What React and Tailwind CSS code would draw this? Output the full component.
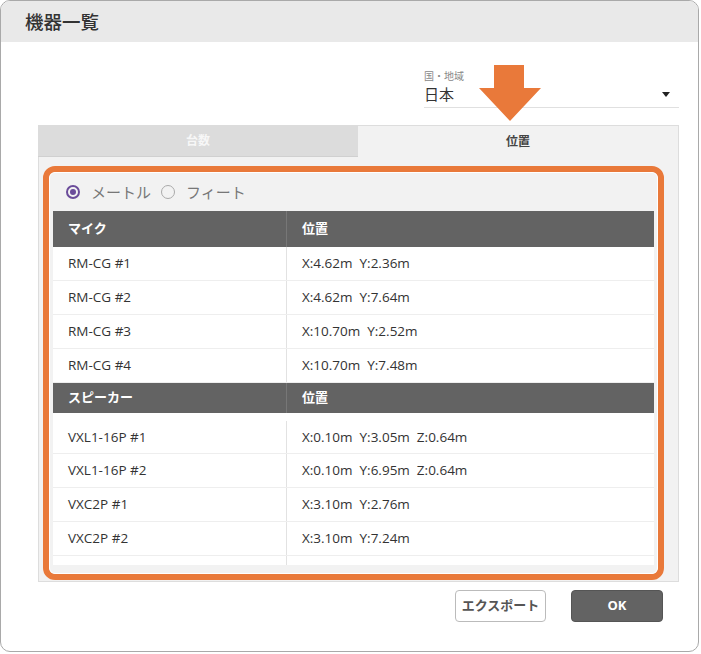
import React from 'react';

const mics = [
  ['RM-CG #1', 'X:4.62m  Y:2.36m'],
  ['RM-CG #2', 'X:4.62m  Y:7.64m'],
  ['RM-CG #3', 'X:10.70m  Y:2.52m'],
  ['RM-CG #4', 'X:10.70m  Y:7.48m'],
];

const speakers = [
  ['VXL1-16P #1', 'X:0.10m  Y:3.05m  Z:0.64m'],
  ['VXL1-16P #2', 'X:0.10m  Y:6.95m  Z:0.64m'],
  ['VXC2P #1', 'X:3.10m  Y:2.76m'],
  ['VXC2P #2', 'X:3.10m  Y:7.24m'],
  ['VXC2P #3', 'X:7.90m  Y:2.76m'],
];

const font = { fontFamily: '"Open Sans", "Noto Sans CJK JP", sans-serif' };

const HeaderRow = ({ name, h }) => (
  <div className={`flex bg-[#636363] text-white font-bold text-[13px] ${h}`}>
    <div className="w-[234px] flex items-center pl-[15px] border-r border-[#777]">{name}</div>
    <div className="flex-1 flex items-center pl-[15px]">位置</div>
  </div>
);

const Row = ({ name, pos, first }) => (
  <div className={`flex bg-white text-[13.5px] text-[#333] border-b border-[#eeeeee] ${first ? 'h-[41px] pt-[8px]' : 'h-[34px]'}`}>
    <div className="w-[234px] flex items-center pl-[15px] border-r border-[#e2e2e2] whitespace-pre">{name}</div>
    <div className="flex-1 flex items-center pl-[15px] whitespace-pre">{pos}</div>
  </div>
);

export default function App() {
  return (
    <div className="w-[701px] h-[654px] bg-white" style={font}>
      <div className="relative w-[699px] h-[652px] border border-[#a9a9a9] rounded-[10px] overflow-hidden flex flex-col">
        <div className="h-[41px] bg-[#e9e9e9] flex items-center pl-[24px] text-[18.5px] font-medium text-[#333] shrink-0">
          機器一覧
        </div>

        {/* country */}
        <div className="ml-[423px] mt-[27px] w-[255px] border-b border-[#e0e0e0] pb-[2px]">
          <div className="text-[10px] leading-[14px] text-[#888]">国・地域</div>
          <div className="flex items-center justify-between text-[15px] leading-[22px] text-[#333]">
            <span>日本</span>
            <svg width="8" height="5" viewBox="0 0 8 5" className="mr-[9px]">
              <path d="M0 0h8L4 5z" fill="#222" />
            </svg>
          </div>
        </div>

        {/* tabs */}
        <div className="ml-[37px] mt-[17px] w-[641px]">
          <div className="flex h-[32px] text-[12px] font-bold">
            <div className="w-[320px] bg-[#dcdcdc] text-[#f7f7f7] flex items-center justify-center border-b border-[#d0d0d0]">台数</div>
            <div className="flex-1 bg-[#f2f2f2] text-[#444] flex items-center justify-center border-t border-r border-[#dddddd]">位置</div>
          </div>
          <div className="h-[425px] bg-[#f2f2f2] border-l border-r border-b border-[#dddddd] pl-[4px] pr-[14px] pt-[9px]">
            <div className="h-[414px] border-[6px] border-[#e9793a] rounded-[12px] overflow-hidden">
              <div className="h-full bg-[#f2f2f2] border border-white rounded-[6px] px-[3px] pb-[8px] flex flex-col">
                <div className="h-[38px] flex items-center pl-[13px] text-[15px] text-[#777] shrink-0">
                  <span className="w-[14px] h-[14px] rounded-full border-[2px] border-[#6b4c9a] flex items-center justify-center">
                    <span className="w-[6px] h-[6px] rounded-full bg-[#6b4c9a]" />
                  </span>
                  <span className="ml-[11px]">メートル</span>
                  <span className="ml-[10px] w-[14px] h-[14px] rounded-full border border-[#aaa]" />
                  <span className="ml-[11px]">フィート</span>
                </div>
                <div className="flex-1 overflow-hidden">
                  <HeaderRow name="マイク" h="h-[36px]" />
                  {mics.map(([n, p]) => (
                    <Row key={n} name={n} pos={p} />
                  ))}
                  <HeaderRow name="スピーカー" h="h-[30px]" />
                  {speakers.map(([n, p], i) => (
                    <Row key={n} name={n} pos={p} first={i === 0} />
                  ))}
                </div>
              </div>
            </div>
          </div>
        </div>

        {/* buttons */}
        <div className="flex justify-end gap-[25px] mt-[8px] pr-[35px]">
          <button className="w-[91px] h-[32px] border border-[#bbbbbb] rounded-[4px] bg-white text-[13px] font-bold text-[#555]">
            エクスポート
          </button>
          <button className="w-[92px] h-[32px] rounded-[4px] bg-[#636363] border border-[#555] text-[13px] font-bold text-white">
            OK
          </button>
        </div>

        {/* annotation arrow */}
        <svg className="absolute left-[477px] top-[64px]" width="64" height="57" viewBox="0 0 64 57">
          <path d="M16 0h30v23h17L32 56 1 23h15z" fill="#e9793a" />
        </svg>
      </div>
    </div>
  );
}
